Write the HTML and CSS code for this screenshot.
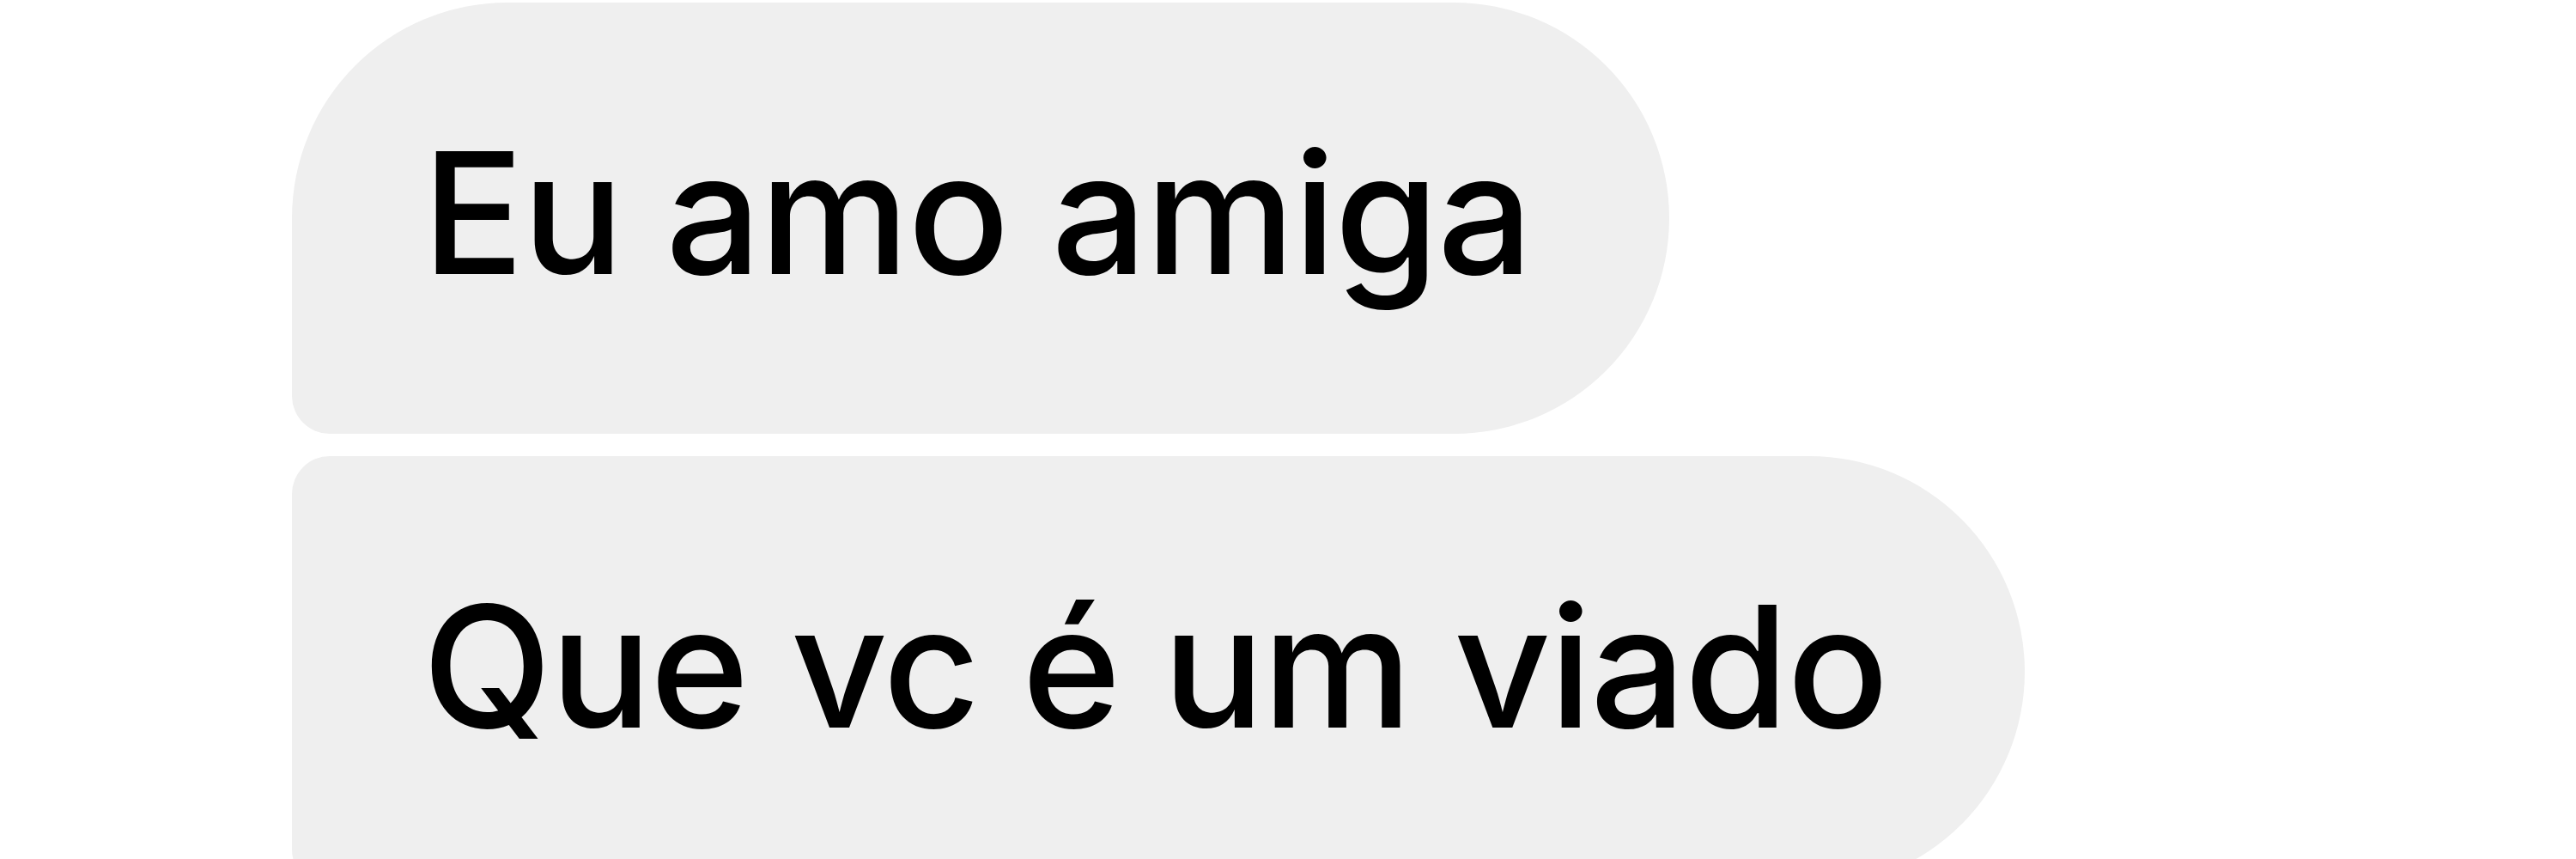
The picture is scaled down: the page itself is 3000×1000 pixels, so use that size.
FILE: index.html
```html
<!DOCTYPE html>
<html lang="pt">
<head>
<meta charset="utf-8">
<title>Mensagens</title>
<link rel="stylesheet" href="styles.css">
</head>
<body>
<div class="thread">
  <div class="bubble bubble-first">Eu amo amiga</div>
  <div class="bubble bubble-middle">Que vc é um viado</div>
</div>
</body>
</html>
```
FILE: styles.css
```css
html, body {
  margin: 0;
  padding: 0;
  background: #ffffff;
}
body {
  width: 3000px;
  height: 1000px;
  overflow: hidden;
}
.thread {
  display: flex;
  flex-direction: column;
  align-items: flex-start;
  gap: 26px;
  padding: 3px 0 0 340px;
}
.bubble {
  box-sizing: border-box;
  height: 502px;
  background: #efefef;
  color: #000000;
  font-family: Inter, "Noto Sans", "Liberation Sans", sans-serif;
  font-size: 196px;
  font-weight: 500;
  letter-spacing: -1.7px;
  line-height: 238px;
  padding: 126px 160px 138px 152px;
  white-space: nowrap;
}
.bubble-first {
  border-radius: 251px 251px 251px 44px;
}
.bubble-middle {
  border-radius: 44px 251px 251px 44px;
}
```
